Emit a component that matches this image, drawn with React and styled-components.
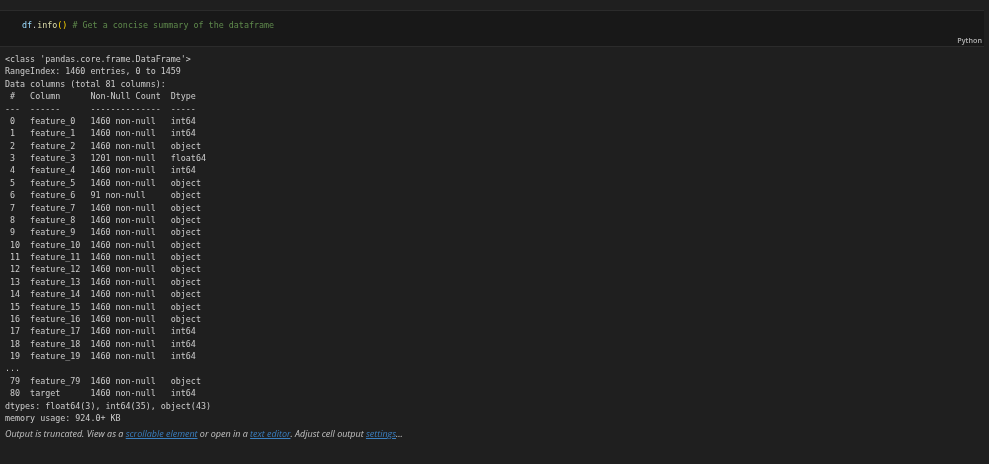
import React from "react";
import styled, { createGlobalStyle } from "styled-components";

const GlobalStyle = createGlobalStyle`
  html, body {
    margin: 0;
    padding: 0;
    background: #ffffff;
  }
`;

const Page = styled.div`
  width: 1000px;
  height: 464px;
  overflow: hidden;
  display: flex;
  background: #ffffff;
`;

const Notebook = styled.div`
  width: 989px;
  padding-top: 10px;
  background: #1f1f1f;
  box-sizing: border-box;
  filter: blur(0.3px);
`;

const Cell = styled.div`
  width: 984px;
  height: 37px;
  box-sizing: border-box;
  position: relative;
  padding: 8px 0 0 22px;
  background: #181818;
  border-top: 1px solid #2b2b2b;
  border-bottom: 1px solid #2b2b2b;
  font: 8.4px/12px "DejaVu Sans Mono", monospace;
`;

const Token = styled.span`
  color: ${(p) => p.$color};
`;

const Lang = styled.span`
  position: absolute;
  right: 2px;
  bottom: 1px;
  font: 600 7.2px/10px "Open Sans", sans-serif;
  color: #b4b4b4;
`;

const Output = styled.pre`
  margin: 0;
  padding: 6px 0 0 5px;
  font: 8.36px/12.38px "DejaVu Sans Mono", monospace;
  color: #cccccc;
`;

const Notice = styled.div`
  padding: 4px 0 0 5px;
  font: italic 8.96px/12px "Open Sans", sans-serif;
  color: #c4c4c4;
`;

const NoticeLink = styled.a`
  color: #3a7fc0;
  text-decoration: underline;
`;

const features = [
  ["0", "1460 non-null", "int64"],
  ["1", "1460 non-null", "int64"],
  ["2", "1460 non-null", "object"],
  ["3", "1201 non-null", "float64"],
  ["4", "1460 non-null", "int64"],
  ["5", "1460 non-null", "object"],
  ["6", "91 non-null", "object"],
  ["7", "1460 non-null", "object"],
  ["8", "1460 non-null", "object"],
  ["9", "1460 non-null", "object"],
  ["10", "1460 non-null", "object"],
  ["11", "1460 non-null", "object"],
  ["12", "1460 non-null", "object"],
  ["13", "1460 non-null", "object"],
  ["14", "1460 non-null", "object"],
  ["15", "1460 non-null", "object"],
  ["16", "1460 non-null", "object"],
  ["17", "1460 non-null", "int64"],
  ["18", "1460 non-null", "int64"],
  ["19", "1460 non-null", "int64"],
];

const row = (n, name, count, type) =>
  ` ${n.padEnd(2, " ")}  ${name.padEnd(10, " ")}  ${count.padEnd(14, " ")}  ${type}`;

const outputText = [
  "<class 'pandas.core.frame.DataFrame'>",
  "RangeIndex: 1460 entries, 0 to 1459",
  "Data columns (total 81 columns):",
  " #   Column      Non-Null Count  Dtype",
  "---  ------      --------------  -----",
  ...features.map(([n, count, type]) => row(n, `feature_${n}`, count, type)),
  "...",
  row("79", "feature_79", "1460 non-null", "object"),
  row("80", "target", "1460 non-null", "int64"),
  "dtypes: float64(3), int64(35), object(43)",
  "memory usage: 924.0+ KB",
].join("\n");

export default function App() {
  return (
    <Page>
      <GlobalStyle />
      <Notebook>
        <Cell>
          <Token $color="#9cdcfe">df</Token>
          <Token $color="#cccccc">.</Token>
          <Token $color="#dcdcaa">info</Token>
          <Token $color="#ffd700">()</Token>
          <Token $color="#5f8a4c"> # Get a concise summary of the dataframe</Token>
          <Lang>Python</Lang>
        </Cell>
        <Output>{outputText}</Output>
        <Notice>
          Output is truncated. View as a <NoticeLink>scrollable element</NoticeLink> or open in a{" "}
          <NoticeLink>text editor</NoticeLink>. Adjust cell output <NoticeLink>settings</NoticeLink>...
        </Notice>
      </Notebook>
    </Page>
  );
}
